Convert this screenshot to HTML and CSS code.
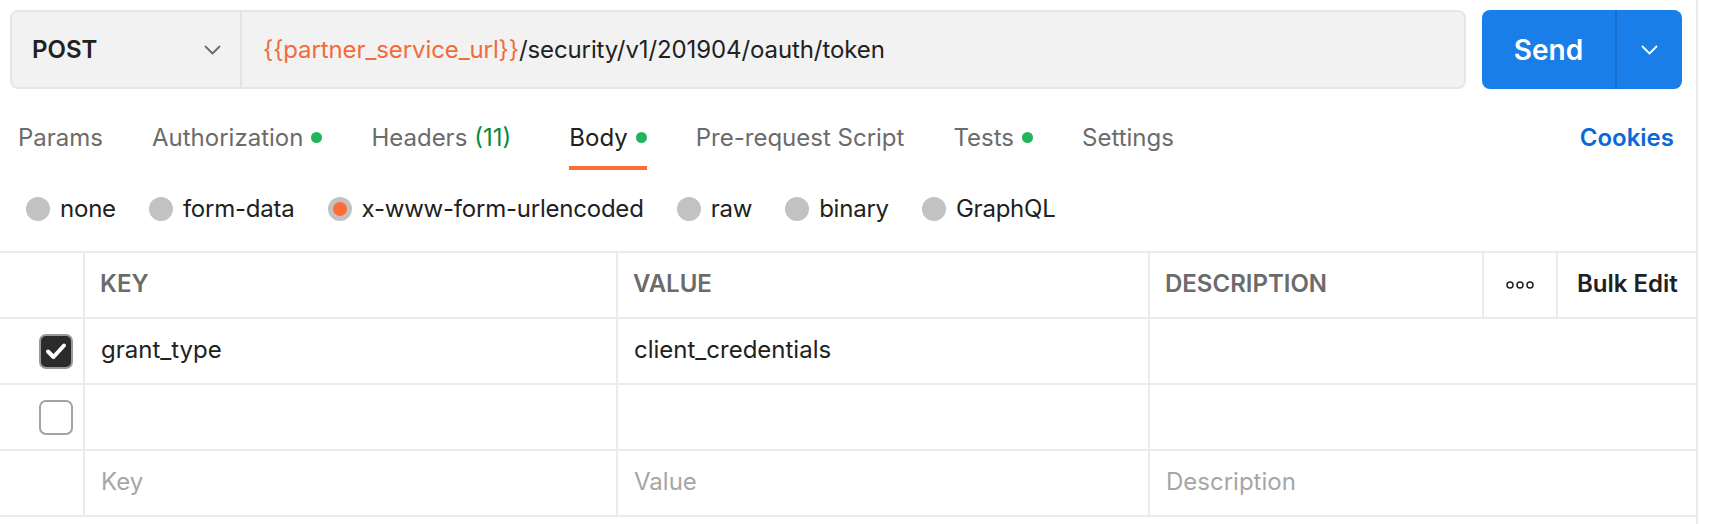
FILE: index.html
```html
<!DOCTYPE html>
<html lang="en">
<head>
<meta charset="utf-8">
<title>Request</title>
<link rel="stylesheet" href="styles.css">
</head>
<body>
<div class="page">
  <div class="request-bar">
    <div class="url-box">
      <div class="method">
        <span class="method-name">POST</span>
        <svg class="chev" width="17" height="10" viewBox="0 0 17 10"><polyline points="1.5,1.5 8.5,8.5 15.5,1.5" fill="none" stroke="#6b6b6b" stroke-width="1.8" stroke-linecap="round" stroke-linejoin="round"/></svg>
      </div>
      <div class="url"><span class="var">{{partner_service_url}}</span>/security/v1/201904/oauth/token</div>
    </div>
    <div class="send">
      <div class="send-main">Send</div>
      <div class="send-drop">
        <svg width="17" height="10" viewBox="0 0 17 10"><polyline points="1.5,1.5 8.5,8.5 15.5,1.5" fill="none" stroke="#ffffff" stroke-width="1.8" stroke-linecap="round" stroke-linejoin="round"/></svg>
      </div>
    </div>
  </div>

  <div class="tabs">
    <div class="tab">Params</div>
    <div class="tab">Authorization<span class="dot"></span></div>
    <div class="tab tab-headers">Headers <span class="count">(11)</span></div>
    <div class="tab active">Body<span class="dot"></span></div>
    <div class="tab">Pre-request Script</div>
    <div class="tab">Tests<span class="dot"></span></div>
    <div class="tab">Settings</div>
    <div class="tab-spacer"></div>
    <div class="cookies">Cookies</div>
  </div>

  <div class="radios">
    <div class="radio"><span class="circle"></span><span class="label">none</span></div>
    <div class="radio"><span class="circle"></span><span class="label">form-data</span></div>
    <div class="radio"><span class="circle selected"></span><span class="label">x-www-form-urlencoded</span></div>
    <div class="radio"><span class="circle"></span><span class="label">raw</span></div>
    <div class="radio"><span class="circle"></span><span class="label">binary</span></div>
    <div class="radio"><span class="circle"></span><span class="label">GraphQL</span></div>
  </div>

  <div class="table">
    <div class="cell head check-cell"></div>
    <div class="cell head">KEY</div>
    <div class="cell head">VALUE</div>
    <div class="cell head">DESCRIPTION</div>
    <div class="cell head dots-cell">
      <svg width="28" height="8" viewBox="0 0 28 8"><circle cx="4" cy="4" r="3" fill="none" stroke="#212121" stroke-width="1.5"/><circle cx="14" cy="4" r="3" fill="none" stroke="#212121" stroke-width="1.5"/><circle cx="24" cy="4" r="3" fill="none" stroke="#212121" stroke-width="1.5"/></svg>
    </div>
    <div class="cell head bulk">Bulk Edit</div>

    <div class="cell check-cell"><span class="checkbox checked"><svg width="30" height="30" viewBox="0 0 30 30"><polyline points="7,15.5 12.5,21 23,9.5" fill="none" stroke="#ffffff" stroke-width="4" stroke-linecap="round" stroke-linejoin="round"/></svg></span></div>
    <div class="cell">grant_type</div>
    <div class="cell">client_credentials</div>
    <div class="cell desc"></div>

    <div class="cell check-cell"><span class="checkbox"></span></div>
    <div class="cell"></div>
    <div class="cell"></div>
    <div class="cell desc"></div>

    <div class="cell check-cell"></div>
    <div class="cell placeholder">Key</div>
    <div class="cell placeholder">Value</div>
    <div class="cell desc placeholder">Description</div>
  </div>
</div>
</body>
</html>
```

FILE: styles.css
```css
* { box-sizing: border-box; }
html, body { margin: 0; padding: 0; background: #ffffff; }
body {
  font-family: Inter, "Noto Sans", "Liberation Sans", sans-serif;
  color: #212121;
  font-size: 24px;
}
.page {
  width: 1698px;
  min-height: 524px;
  border-right: 2px solid #ebebeb;
  padding-top: 10px;
}

/* request bar */
.request-bar {
  display: flex;
  gap: 16px;
  margin: 0 14px 0 10px;
  height: 79px;
}
.url-box {
  flex: 1;
  display: flex;
  background: #f2f2f2;
  border: 2px solid #e6e6e6;
  border-radius: 8px;
}
.method {
  width: 230px;
  flex: none;
  display: flex;
  align-items: center;
  justify-content: space-between;
  padding: 0 19px 0 20px;
  border-right: 2px solid #e3e3e3;
}
.method-name { font-weight: 600; font-size: 24px; }
.url {
  display: flex;
  align-items: center;
  padding-left: 21px;
  font-size: 24px;
  letter-spacing: -0.1px;
  color: #212121;
  white-space: nowrap;
}
.var { color: #f26b3a; }
.send {
  width: 200px;
  flex: none;
  display: flex;
  background: #1a7ee9;
  border-radius: 8px;
  color: #ffffff;
}
.send-main {
  width: 135px;
  display: flex;
  align-items: center;
  justify-content: center;
  font-size: 28px;
  font-weight: 600;
  border-right: 2px solid #156ecf;
}
.send-drop {
  flex: 1;
  display: flex;
  align-items: center;
  justify-content: center;
}

/* tabs */
.tabs {
  display: flex;
  align-items: stretch;
  margin-top: 15px;
  padding: 0 22px 0 18px;
  height: 66px;
}
.tab {
  display: flex;
  align-items: center;
  height: 66px;
  padding-top: 4px;
  border-bottom: 4px solid transparent;
  margin-right: 49px;
  color: #6b6b6b;
  white-space: nowrap;
}
.tab.active {
  color: #212121;
  border-bottom-color: #ff6c37;
}
.tab-headers { margin-right: 58px; }
.count { color: #0b8a3e; margin-left: 7px; }
.dot {
  width: 11px;
  height: 11px;
  border-radius: 50%;
  background: #1fb75a;
  margin-left: 8px;
}
.tab-spacer { flex: 1; }
.cookies {
  display: flex;
  align-items: center;
  padding-top: 4px;
  padding-bottom: 4px;
  font-weight: 600;
  color: #0b68d6;
}

/* radios */
.radios {
  display: flex;
  align-items: center;
  height: 24px;
  margin-top: 27px;
  padding-left: 26px;
}
.radio {
  display: flex;
  align-items: center;
  margin-right: 33px;
}
.circle {
  width: 24px;
  height: 24px;
  border-radius: 50%;
  background: #c2c2c2;
  margin-right: 10px;
  display: flex;
  align-items: center;
  justify-content: center;
}
.circle.selected::after {
  content: "";
  width: 14px;
  height: 14px;
  border-radius: 50%;
  background: #ff6c37;
}
.label { line-height: 24px; letter-spacing: -0.22px; }

/* table */
.table {
  margin-top: 30px;
  display: grid;
  grid-template-columns: 83px 533px 532px 334px 74px 140px;
  grid-auto-rows: 66px;
  border-top: 2px solid #ebebeb;
}
.cell {
  display: flex;
  align-items: center;
  padding: 0 16px 3px;
  border-bottom: 2px solid #ebebeb;
  border-left: 2px solid #ebebeb;
  white-space: nowrap;
}
.cell.check-cell {
  border-left: none;
  justify-content: flex-end;
  padding: 0 10px 0 0;
}
.cell.head {
  font-size: 24px;
  font-weight: 600;
  color: #6b6b6b;
  padding-left: 15px;
}
.cell.head.check-cell { border-left: none; }
.cell.dots-cell { justify-content: center; padding: 0; }
.cell.bulk { color: #212121; font-size: 24px; padding: 0 0 3px 19px; }
.cell.desc { grid-column: span 3; }
.placeholder { color: #a6a6a6; }

.checkbox {
  width: 34px;
  height: 35px;
  border: 2px solid #a3a3a3;
  border-radius: 7px;
  background: #ffffff;
  display: flex;
  align-items: center;
  justify-content: center;
}
.checkbox.checked {
  background: #2b2b2b;
  border-color: #9a9a9a;
}
```
